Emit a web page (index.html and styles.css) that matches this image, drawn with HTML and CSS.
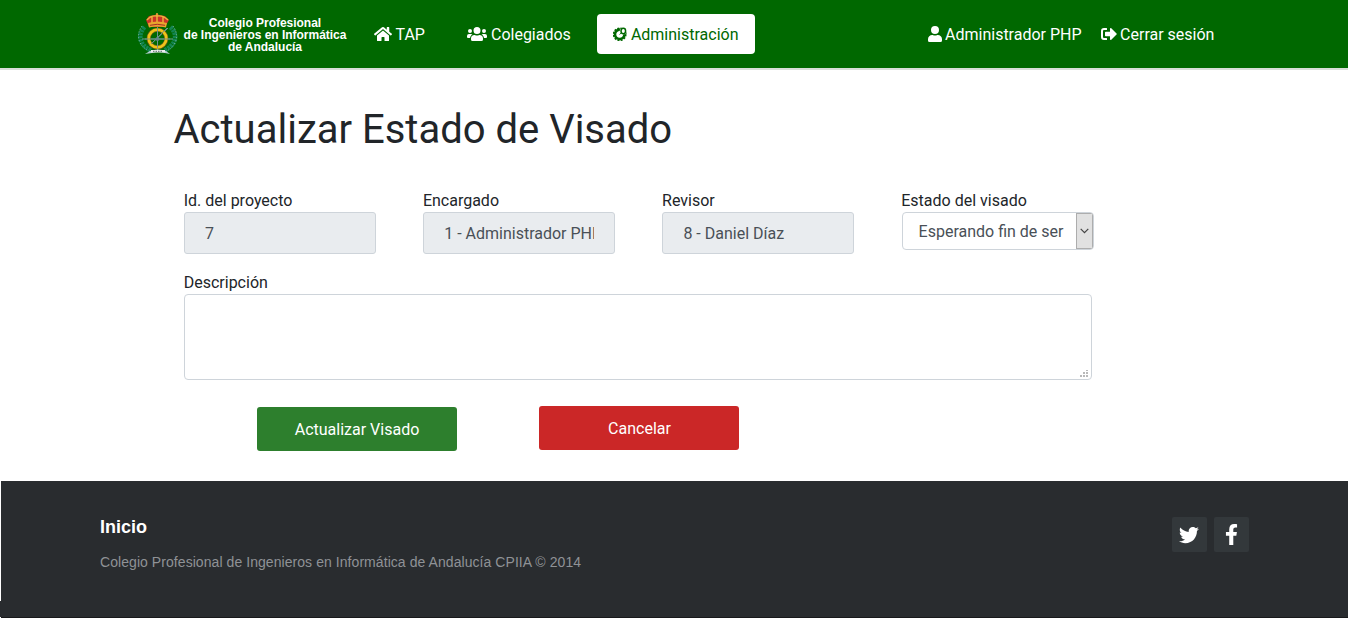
FILE: index.html
```html
<!DOCTYPE html>
<html lang="es">
<head>
<meta charset="utf-8">
<title>Actualizar Estado de Visado</title>
<link rel="stylesheet" href="styles.css">
</head>
<body>
<header class="navbar">
  <a class="brand">
    <svg class="crest" viewBox="0 0 42 42">
      <g fill="none" stroke="#138552" stroke-width="4.6" stroke-dasharray="2.6 .7">
        <path d="M7.500 14C1 21 1 31 14 37.500"/><path d="M33.500 14c7 7 7 17-6 23.500"/>
      </g>
      <g fill="none" stroke="#8fbcae" stroke-width=".9" stroke-dasharray="1 2">
        <path d="M5 13C-1 21 0 33 14 39"/><path d="M36 13c6 8 5 20-8 26"/>
      </g>
      <path d="M12 14 9 7l3-4 6-1 2-1.500L22 2l6 1 4 4-4 7z" fill="#cc3328"/>
      <path d="M10 7q4-5 10-4 6-1 11 4M15 11V4m5 7V0m6 11V4" fill="none" stroke="#edb73d" stroke-width="1.400"/>
      <path d="M11 10q9-3 19 0l-1 4.500q-9-2-17 0z" fill="#e9a62d"/>
      <path d="M13 12.300q7-2 15 0" stroke="#a42b28" fill="none"/>
      <path d="M20.500 14v24M5 26h31M12 33l19-18" stroke="#719c98" stroke-width="1"/>
      <circle cx="20.500" cy="25.500" r="8.800" fill="none" stroke="#6b5d18" stroke-width="4"/>
      <circle cx="20.500" cy="25.500" r="8.800" fill="none" stroke="#efc319" stroke-width="2.800"/>
      <path d="M20.500 15v20M8 26h25M14 31l16-16" stroke="#71908d" stroke-width=".9"/>
      <circle cx="20.500" cy="26" r="2" fill="#5f8589"/>
      <path d="M13 38q8-3 16 0l4 3-5-1q-7-2-13 0l-7 1z" fill="#b6ced2"/>
      <path d="M14 37h14v2.500H14z" fill="#eee"/>
      <path d="M16 38.300h9" stroke="#526766" stroke-dasharray="1.500 1"/>
    </svg>
    <span class="brand-text">Colegio Profesional<br>de Ingenieros en Informática<br>de Andalucía</span>
  </a>
  <nav class="main-nav">
    <a class="nav-link"><svg class="ic ic-home" viewBox="0 0 576 512"><path d="M280 148 96 300v164a16 16 0 0 0 16 16h112a16 16 0 0 0 16-16v-96a16 16 0 0 1 16-16h64a16 16 0 0 1 16 16v96a16 16 0 0 0 16 16h112a16 16 0 0 0 16-16V300L296 148a12 12 0 0 0-16 0zM572 251l-84-69V44a12 12 0 0 0-12-12h-56a12 12 0 0 0-12 12v72l-90-74a48 48 0 0 0-61 0L4 251a12 12 0 0 0-1 17l25 31a12 12 0 0 0 17 2l235-194a12 12 0 0 1 16 0l235 194a12 12 0 0 0 17-2l25-31a12 12 0 0 0-1-17z"/></svg><span class="label">TAP</span></a>
    <a class="nav-link"><svg class="ic ic-users" viewBox="0 0 640 512"><path d="M96 224a64 64 0 1 0 0-128 64 64 0 0 0 0 128zm448 0a64 64 0 1 0 0-128 64 64 0 0 0 0 128zm32 32h-64c-18 0-34 7-45 18 40 22 69 62 75 110h66a32 32 0 0 0 32-32v-32a64 64 0 0 0-64-64zm-256 0a112 112 0 1 0 0-224 112 112 0 0 0 0 224zm77 32h-8a155 155 0 0 1-138 0h-8a115 115 0 0 0-115 115v29a48 48 0 0 0 48 48h288a48 48 0 0 0 48-48v-29a115 115 0 0 0-115-115zm-224-14a64 64 0 0 0-45-18H64a64 64 0 0 0-64 64v32a32 32 0 0 0 32 32h66c6-48 35-88 75-110z"/></svg><span class="label">Colegiados</span></a>
    <a class="nav-link active"><svg class="ic ic-cog" viewBox="0 0 14 14"><g fill="none" stroke="currentColor"><circle cx="6.700" cy="7.300" r="4.700" stroke-width="2.600"/><circle cx="6.700" cy="7.300" r="6.100" stroke-width="1.600" stroke-dasharray="2 1.190"/></g><circle cx="10" cy="4.200" r="3.300" fill="#fff"/><path d="m6.700 7.500 3-3" stroke="currentColor" stroke-width="1"/><ellipse cx="10.300" cy="4" rx="2.300" ry="2.700" fill="#fff" stroke="currentColor" stroke-width="1.500"/></svg><span class="label">Administración</span></a>
  </nav>
  <nav class="user-nav">
    <a class="user-link"><svg class="ic ic-user" viewBox="0 0 448 512"><path d="M224 256a128 128 0 1 0 0-256 128 128 0 0 0 0 256zm90 32h-17a174 174 0 0 1-146 0h-17A134 134 0 0 0 0 422v42a48 48 0 0 0 48 48h352a48 48 0 0 0 48-48v-42a134 134 0 0 0-134-134z"/></svg><span class="label">Administrador PHP</span></a>
    <a class="user-link"><svg class="ic ic-out" viewBox="0 0 512 512"><path d="M497 273 329 441c-15 15-41 5-41-17v-96H152a24 24 0 0 1-24-24v-96a24 24 0 0 1 24-24h136V88c0-21 26-32 41-17l168 168a24 24 0 0 1 0 34zM192 436v-40a12 12 0 0 0-12-12H96a32 32 0 0 1-32-32V160a32 32 0 0 1 32-32h84a12 12 0 0 0 12-12V76a12 12 0 0 0-12-12H96a96 96 0 0 0-96 96v192a96 96 0 0 0 96 96h84a12 12 0 0 0 12-12z"/></svg><span class="label">Cerrar sesión</span></a>
  </nav>
</header>
<main class="content">
  <h1 class="title">Actualizar Estado de Visado</h1>
  <form class="form">
    <div class="fields">
      <label class="field"><span class="caption">Id. del proyecto</span><input class="control" value="7" disabled></label>
      <label class="field"><span class="caption">Encargado</span><input class="control" value="1 - Administrador PHP" disabled></label>
      <label class="field"><span class="caption">Revisor</span><input class="control" value="8 - Daniel Díaz" disabled></label>
      <div class="field"><span class="caption">Estado del visado</span>
        <div class="select"><span class="select-value">Esperando fin de ser</span><span class="select-arrow"><svg class="chevron" viewBox="0 0 9 6"><path d="m.7.8 3.800 3.800L8.300.8" fill="none" stroke="#444" stroke-width="1.200"/></svg></span></div>
      </div>
    </div>
    <div class="description"><span class="caption">Descripción</span>
      <div class="textarea"><svg class="grip" viewBox="0 0 8 7"><path d="M6 0h2v1H6zM3 2h2v2H3zM6 2h2v2H6zM0 5h2v2H0zM3 5h2v2H3zM6 5h2v2H6z"/></svg></div>
    </div>
    <div class="actions"><button class="btn save" type="button">Actualizar Visado</button><button class="btn cancel" type="button">Cancelar</button></div>
  </form>
</main>
<footer>
  <div class="footer">
    <div class="footer-info"><h2 class="footer-title">Inicio</h2><p class="footer-copy">Colegio Profesional de Ingenieros en Informática de Andalucía CPIIA © 2014</p></div>
    <div class="social">
      <a class="social-link"><svg class="twitter" viewBox="0 0 512 512"><path d="M459 152c0 4 0 9 0 13 0 139-106 299-299 299-59 0-115-17-161-47 8 1 16 1 25 1 49 0 94-17 130-45-46-1-85-31-98-73 7 1 13 2 20 2 9 0 19-1 27-4-48-10-84-52-84-103v-1c14 8 30 13 47 13-28-19-46-51-46-87 0-19 5-37 14-53 52 64 129 105 216 110-2-8-3-16-3-24 0-58 47-105 105-105 30 0 58 13 77 33 24-5 46-13 67-25-8 24-24 45-46 58 21-2 42-8 60-16-14 21-32 39-52 54z"/></svg></a>
      <a class="social-link"><svg class="facebook" viewBox="0 0 320 512"><path d="m279 288 14-93h-89v-60c0-25 13-50 53-50h40V6s-37-6-72-6c-73 0-121 44-121 125v70H23v93h81v224h100V288z"/></svg></a>
    </div>
  </div>
  <div class="footer-base"></div>
  <div class="footer-edge"></div>
</footer>
</body>
</html>
```
FILE: styles.css
```css
* { box-sizing: border-box; }
body { margin: 0; height: 618px; overflow: hidden; background: #fff; color: #212529; font: 16px/24px Roboto, sans-serif; }
.navbar { height: 70px; display: flex; align-items: center; background: #006800; border-bottom: 2px solid #d9dfd9; color: #fff; padding-left: 137px; }
.brand { display: flex; width: 221px; align-items: center; }
.crest { width: 42px; height: 42px; flex: none; }
.brand-text { width: 172px; text-align: center; font: bold 12px/12px "Liberation Sans", sans-serif; letter-spacing: -0.02px; white-space: nowrap; margin-top: 1px; }
.main-nav { display: flex; gap: 10px; }
.nav-link { height: 40px; padding: 0 16px; border-radius: 4px; white-space: nowrap; display: flex; align-items: center; }
.active { background: #fff; color: #006800; }
.label { padding-top: 2px; margin-left: -0.5px; margin-right: 0.5px; }
.ic { fill: currentColor; height: 16px; margin-right: 4px; flex: none; }
.ic-home { width: 18px; }
.ic-users { width: 20px; }
.ic-cog { width: 14px; height: 14px; }
.ic-user { width: 14px; }
.ic-out { width: 16px; }
.user-nav { display: flex; gap: 18.5px; margin-left: 172.5px; }
.user-link { display: flex; align-items: center; white-space: nowrap; }
.content { height: 411px; padding: 36px 0 0 173.5px; }
.title { margin: 0; font-size: 40px; line-height: 48px; font-weight: 400; }
.form { padding: 34px 0 0 10.5px; }
.fields { display: grid; grid-template-columns: repeat(4, 192px); column-gap: 47.2px; height: 82px; }
.caption { display: block; height: 24px; line-height: 26px; margin-left: -0.3px; }
.control { display: block; width: 192px; height: 42px; border: 1px solid #ced4da; border-radius: 3px; background: #e9ecef; color: #495057; font: 16px Roboto, sans-serif; padding: 0 20px; }
.select { display: flex; width: 192px; height: 38px; border: 1px solid #ced4da; border-radius: 4px; color: #495057; overflow: hidden; }
.select-value { flex: 1; padding: 7px 0 0 16px; white-space: nowrap; }
.select-arrow { width: 17px; display: flex; align-items: center; justify-content: center; background: #e1e1e1; border: 1px solid #adadad; }
.chevron { width: 9px; height: 6px; flex: none; }
.textarea { width: 908px; height: 86px; border: 1px solid #ced4da; border-radius: 4px; display: flex; align-items: flex-end; justify-content: flex-end; padding: 2px 3px; }
.grip { width: 8px; height: 7px; fill: #b9b9b9; }
.actions { display: flex; gap: 82px; padding: 26px 0 0 73px; }
.btn { width: 200px; height: 44px; border: 0; border-radius: 3px; color: #fff; font: 16px Roboto, sans-serif; padding: 0; }
.save { background: #2d7f2d; margin-top: 1px; }
.cancel { background: #cb2727; padding-left: 1px; }
.footer { height: 120px; margin-left: 1px; display: flex; justify-content: space-between; background: #292c2f; padding: 36px 99px 0; font-family: "Liberation Sans", sans-serif; }
.footer-base { height: 16px; background: #292c2f; }
.footer-edge { height: 1px; margin-left: 1px; background: #18191b; }
.footer-title { margin: 0; color: #fff; font-size: 18px; line-height: 20px; }
.footer-copy { margin: 16px 0 0; color: #8f9296; font-size: 14px; line-height: 18px; letter-spacing: 0.062px; }
.social { display: flex; gap: 7px; }
.social-link { width: 35px; height: 35px; display: flex; align-items: center; justify-content: center; background: #33383b; border-radius: 2px; padding: 0 1px 0 0; }
.twitter { width: 20px; height: 20px; fill: #fff; }
.facebook { width: 13px; height: 21px; fill: #fff; }
```
